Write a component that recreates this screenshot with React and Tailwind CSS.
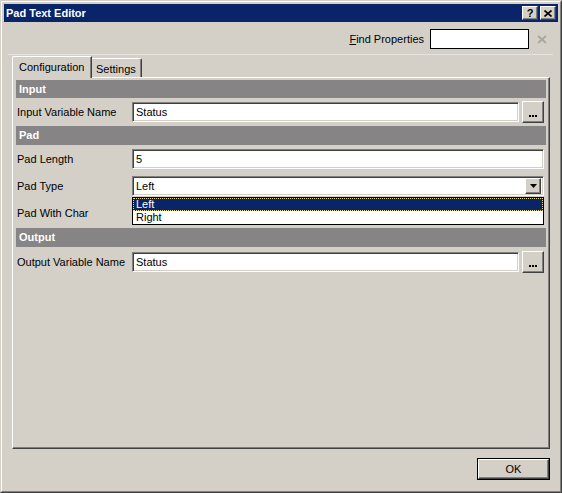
const raised =
  "border border-t-white border-l-white border-r-[#404040] border-b-[#404040] shadow-[inset_-1px_-1px_0_#808080]";
const sunken =
  "border border-t-[#808080] border-l-[#808080] border-r-white border-b-white shadow-[inset_1px_1px_0_#404040,inset_-1px_-1px_0_#d4d0c8] bg-white";

function SectionHeader({ title, className }) {
  return (
    <div className={"bg-[#868485] text-white font-bold flex items-center pl-[3px] " + className}>
      {title}
    </div>
  );
}

function Dots() {
  return (
    <div className={"w-[22px] h-[22px] flex items-end justify-center gap-[1px] pb-[5px] shrink-0 " + raised}>
      <span className="w-[2px] h-[2px] bg-black" />
      <span className="w-[2px] h-[2px] bg-black" />
      <span className="w-[2px] h-[2px] bg-black" />
    </div>
  );
}

function Label({ children }) {
  return <div className="w-[116px] shrink-0 pl-[1px]">{children}</div>;
}

function TextBox({ value, className = "" }) {
  return (
    <div className={"h-[20px] flex items-center pl-[3px] " + sunken + " " + className}>{value}</div>
  );
}

export default function App() {
  return (
    <div className="w-[562px] h-[493px] bg-[#d4d0c8] font-['Liberation_Sans',Arial,sans-serif] text-[11px] text-black leading-none select-none">
      {/* window frame */}
      <div className="w-full h-full border border-t-[#d4d0c8] border-l-[#d4d0c8] border-r-[#404040] border-b-[#404040]">
        <div className="w-full h-full border border-t-white border-l-white border-r-[#808080] border-b-[#808080] p-[2px] flex flex-col">
          {/* title bar */}
          <div className="h-[18px] bg-[#0a246a] flex items-center pl-[2px] pr-[2px] shrink-0">
            <span className="text-white font-bold text-[11px]">Pad Text Editor</span>
            <div className="ml-auto flex gap-[2px]">
              <div className={"w-[16px] h-[14px] bg-[#d4d0c8] flex items-center justify-center font-bold text-[11px] " + raised}>
                ?
              </div>
              <div className={"w-[16px] h-[14px] bg-[#d4d0c8] flex items-center justify-center " + raised}>
                <svg width="8" height="7" viewBox="0 0 8 7">
                  <path d="M0.5 0.5 L7.5 6.5 M7.5 0.5 L0.5 6.5" stroke="black" strokeWidth="1.6" />
                </svg>
              </div>
            </div>
          </div>

          {/* find properties */}
          <div className="flex items-center justify-end pt-[7px] pr-[11px] shrink-0">
            <span className="mr-[6px]">
              <span className="underline">F</span>ind Properties
            </span>
            <div className="w-[99px] h-[20px] bg-white border border-black" />
            <svg className="ml-[8px]" width="10" height="9" viewBox="0 0 10 9">
              <path d="M1 1 L9 8 M9 1 L1 8" stroke="#a8a6a2" strokeWidth="1.8" />
            </svg>
          </div>

          <div className="mt-[5px] ml-[4px] mr-[5px] h-px bg-[#e6e3de] shrink-0" />

          {/* tabs */}
          <div className="ml-[8px] mt-[1px] h-[21px] flex items-end shrink-0">
            <div className="relative z-10 h-[22px] -mb-[1px] bg-[#d4d0c8] border-t border-l border-white border-r border-r-[#404040] shadow-[inset_-1px_0_0_#808080] rounded-tl-[2px] px-[6px] pt-[5px] w-[80px]">
              Configuration
            </div>
            <div className="h-[19px] border-t border-t-white border-r border-r-[#404040] shadow-[inset_-1px_0_0_#808080] rounded-tr-[2px] px-[4px] pt-[5px] w-[50px]">
              Settings
            </div>
          </div>

          {/* tab page */}
          <div className="ml-[8px] w-[538px] h-[372px] shrink-0 border border-t-white border-l-white border-r-[#404040] border-b-[#404040] shadow-[inset_-1px_-1px_0_#808080] pt-[2px] pl-[3px] pr-[3px] flex flex-col">
            <SectionHeader title="Input" className="h-[18px]" />
            <div className="h-[28px] pt-[3px] pr-[2px]">
              <div className="h-[22px] flex items-center">
                <Label>Input Variable Name</Label>
                <TextBox value="Status" className="flex-1 mr-[3px]" />
                <Dots />
              </div>
            </div>

            <SectionHeader title="Pad" className="h-[19px]" />
            <div className="h-[27px] pt-[4px] pr-[2px]">
              <div className="flex items-center">
                <Label>Pad Length</Label>
                <TextBox value="5" className="flex-1" />
              </div>
            </div>
            <div className="h-[27px] pt-[4px] pr-[2px] relative z-20">
              <div className="flex items-center">
                <Label>Pad Type</Label>
                <div className="flex-1 relative">
                  <div className={"h-[20px] flex items-center pl-[3px] pr-[2px] " + sunken}>
                    <span>Left</span>
                    <div className={"ml-auto w-[16px] h-[16px] bg-[#d4d0c8] flex items-center justify-center " + raised}>
                      <svg width="7" height="4" viewBox="0 0 7 4">
                        <polygon points="0,0 7,0 3.5,4" fill="black" />
                      </svg>
                    </div>
                  </div>
                  {/* open dropdown list */}
                  <div className="absolute left-0 right-0 top-full mt-[1px] h-[28px] bg-white border border-black flex flex-col">
                    <div className="h-[13px] bg-[#0a246a] text-white flex items-center pl-[2px] border border-dotted border-[#e8d890]">
                      Left
                    </div>
                    <div className="h-[13px] flex items-center pl-[3px]">Right</div>
                  </div>
                </div>
              </div>
            </div>
            <div className="h-[27px] pt-[4px] pr-[2px]">
              <div className="h-[21px] flex items-center">
                <Label>Pad With Char</Label>
                <TextBox value="" className="flex-1" />
              </div>
            </div>

            <SectionHeader title="Output" className="h-[19px] mt-[2px]" />
            <div className="h-[28px] pt-[4px] pr-[2px]">
              <div className="h-[22px] flex items-center">
                <Label>Output Variable Name</Label>
                <TextBox value="Status" className="flex-1 mr-[3px]" />
                <Dots />
              </div>
            </div>
          </div>

          {/* buttons */}
          <div className="flex justify-end pr-[8px] mt-[9px] shrink-0">
            <div className="w-[73px] h-[22px] border border-black">
              <div className={"w-full h-full flex items-center justify-center " + raised}>OK</div>
            </div>
          </div>
        </div>
      </div>
    </div>
  );
}
